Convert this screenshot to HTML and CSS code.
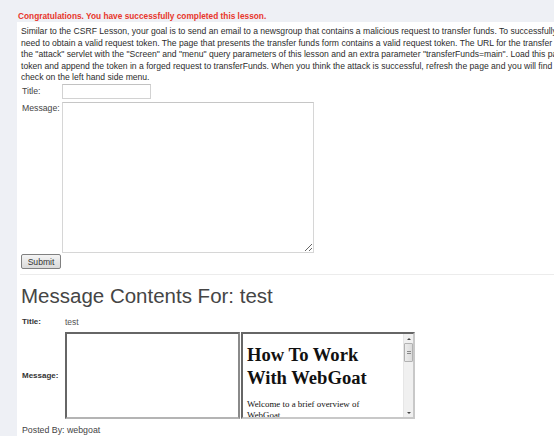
FILE: index.html
```html
<!DOCTYPE html>
<html>
<head>
<meta charset="utf-8">
<title>CSRF Token By-Pass</title>
<link rel="stylesheet" href="styles.css">
</head>
<body>
<div class="congrats">Congratulations. You have successfully completed this lesson.</div>
<div class="panel">
  <p class="intro">
    <span class="line">Similar to the CSRF Lesson, your goal is to send an email to a newsgroup that contains a malicious request to transfer funds. To successfully complete the lesson you</span>
    <span class="line">need to obtain a valid request token. The page that presents the transfer funds form contains a valid request token. The URL for the transfer funds page is</span>
    <span class="line">the "attack" servlet with the "Screen" and "menu" query parameters of this lesson and an extra parameter "transferFunds=main". Load this page, read the</span>
    <span class="line">token and append the token in a forged request to transferFunds. When you think the attack is successful, refresh the page and you will find the green</span>
    <span class="line">check on the left hand side menu.</span>
  </p>
  <form class="post-form">
    <label class="f-label">Title:</label>
    <input class="f-input" type="text">
    <label class="f-label f-top">Message:</label>
    <textarea class="f-text"></textarea>
    <button class="submit" type="button">Submit</button>
  </form>
  <div class="rule"></div>
  <h2 class="heading">Message Contents For: test</h2>
  <div class="msg">
    <div class="m-label">Title:</div>
    <div class="m-value">test</div>
    <div class="m-label">Message:</div>
    <div class="frames">
      <div class="frame"></div>
      <div class="frame frame-doc">
        <div class="doc">
          <h1 class="doc-title">How To Work With WebGoat</h1>
          <p class="doc-text">Welcome to a brief overview of WebGoat.</p>
        </div>
        <div class="sbar">
          <div class="sb-btn sb-up"></div>
          <div class="sb-track"><div class="sb-thumb"></div></div>
          <div class="sb-btn sb-down"></div>
        </div>
      </div>
    </div>
  </div>
  <div class="posted">Posted By: webgoat</div>
</div>
</body>
</html>
```
FILE: styles.css
```css
html, body {
  margin: 0;
  padding: 0;
  overflow: hidden;
  background: #eef0f5;
}

body {
  font-family: "Liberation Sans", Arial, sans-serif;
  color: #333;
}

.congrats {
  height: 22px;
  box-sizing: border-box;
  padding: 11px 0 0 18px;
  font-size: 8.3px;
  font-weight: bold;
  line-height: 10px;
  color: #e8362b;
  white-space: nowrap;
}

.panel {
  margin-left: 17px;
  width: 900px;
  min-height: 420px;
  background: #fff;
  padding: 4px 0 0 4px;
  box-sizing: border-box;
}

.intro {
  margin: 0;
  font-size: 8.6px;
  line-height: 11.5px;
  color: #2c2c2c;
}

.line {
  display: block;
  white-space: nowrap;
}

.post-form {
  display: grid;
  grid-template-columns: 41px auto;
  justify-content: start;
  align-items: center;
  row-gap: 3px;
  margin: 0.5px 0 0 0;
}

.f-label {
  font-size: 8.7px;
  line-height: 11.5px;
  color: #444;
  padding-left: 1px;
}

.f-top {
  align-self: start;
  margin-top: 1px;
}

.f-input {
  width: 89px;
  height: 15px;
  box-sizing: border-box;
  margin: 0;
  padding: 0 2px;
  border: 1px solid #d2d2d2;
  border-top-color: #c2c2c2;
  border-radius: 0;
  font: 8.7px "Liberation Sans", Arial, sans-serif;
  outline: none;
}

.f-text {
  width: 252px;
  height: 151px;
  box-sizing: border-box;
  margin: 0;
  padding: 2px;
  border: 1px solid #d6d6d6;
  border-top-color: #c6c6c6;
  border-radius: 0;
  font: 8.7px "Liberation Sans", Arial, sans-serif;
  outline: none;
}

.submit {
  grid-column: 1 / span 2;
  justify-self: start;
  margin-top: -2px;
  width: 40px;
  height: 15px;
  box-sizing: border-box;
  padding: 0;
  border: 1px solid #808080;
  border-radius: 2px;
  background: linear-gradient(#f4f4f4, #dadada);
  font: 8.6px "Liberation Sans", Arial, sans-serif;
  color: #333;
  line-height: 12px;
}

.rule {
  margin: 5px 0 0 -1px;
  height: 1px;
  background: #ececec;
}

.heading {
  margin: 9px 0 0 0;
  font-size: 20.5px;
  font-weight: normal;
  line-height: 24px;
  color: #454545;
  white-space: nowrap;
}

.msg {
  display: grid;
  grid-template-columns: 44px auto;
  justify-content: start;
  align-items: center;
  row-gap: 4px;
  margin-top: 8px;
}

.m-label {
  font-size: 8px;
  font-weight: bold;
  line-height: 12px;
  color: #333;
  padding-left: 1px;
}

.m-value {
  font-size: 8.5px;
  line-height: 12px;
  color: #555;
}

.frames {
  display: flex;
  gap: 1px;
}

.frame {
  width: 175px;
  height: 87px;
  box-sizing: border-box;
  border: 2px solid;
  border-color: #666 #8a8a8a #b4b4b4 #666;
  background: #fff;
  overflow: hidden;
}

.frame-doc {
  width: 174px;
  display: flex;
  border-color: #666 #c8c8c8 #c8c8c8 #666;
}

.doc {
  flex: 1;
  overflow: hidden;
  padding: 10px 20px 0 4px;
  font-family: "Liberation Serif", "Times New Roman", serif;
  color: #111;
}

.doc-title {
  margin: 0;
  font-size: 18.6px;
  line-height: 22.5px;
  font-weight: bold;
}

.doc-text {
  margin: 10px 0 0 0;
  font-size: 8.9px;
  line-height: 10.5px;
}

.sbar {
  width: 9px;
  display: flex;
  flex-direction: column;
  background: #f0f0f0;
  border-left: 1px solid #e6e6e6;
}

.sb-btn {
  height: 9px;
  display: flex;
  align-items: center;
  justify-content: center;
}

.sb-up::before,
.sb-down::before {
  content: "";
  width: 0;
  height: 0;
  border-left: 2px solid transparent;
  border-right: 2px solid transparent;
}

.sb-up::before {
  border-bottom: 2px solid #444;
}

.sb-down::before {
  border-top: 2px solid #444;
}

.sb-track {
  flex: 1;
}

.sb-thumb {
  height: 19px;
  box-sizing: border-box;
  border: 1px solid #b2b2b2;
  border-radius: 1px;
  background: linear-gradient(90deg, #ececec, #dcdcdc);
  display: flex;
  align-items: center;
  justify-content: center;
}

.sb-thumb::before {
  content: "";
  width: 4px;
  height: 4px;
  background: repeating-linear-gradient(#888 0 1px, transparent 1px 2px);
}

.posted {
  margin-top: 5px;
  padding-left: 1px;
  font-size: 8.8px;
  line-height: 12px;
  color: #444;
}
```
